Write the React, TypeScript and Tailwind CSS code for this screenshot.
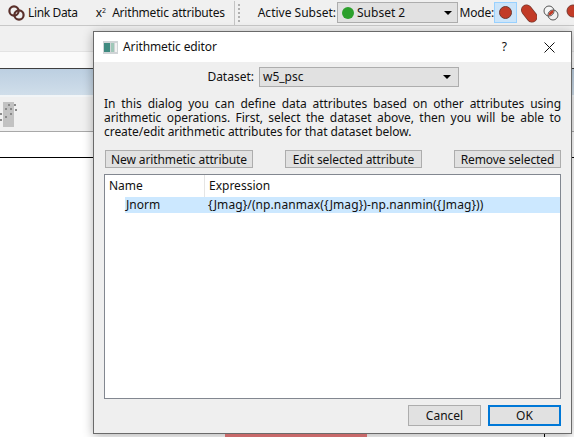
const font = { fontFamily: '"Noto Sans", "Open Sans", sans-serif' };

function Btn({ label, w }: { label: string; w: string }) {
  return (
    <div className={`${w} h-[18px] pt-px flex items-center justify-center bg-[#e1e1e1] border border-[#adadad] text-[12px] leading-none tracking-[-0.1px] text-[#111]`}>
      {label}
    </div>
  );
}

function Rings() {
  return (
    <svg width="17" height="16" viewBox="0 0 17 16" fill="none" stroke="#5a2f2a" strokeWidth="2.2">
      <circle cx="6" cy="6" r="4.6" />
      <circle cx="11" cy="10" r="4.6" />
    </svg>
  );
}

function ModeIcons() {
  return (
    <div className="flex items-center">
      <div className="w-[23px] h-[21px] bg-[#cbe4f9] border border-[#99d1ff] flex items-center justify-center">
        <svg width="15" height="15"><circle cx="7.5" cy="7.5" r="6" fill="#c23b27" stroke="#6f3a30" /></svg>
      </div>
      <svg className="ml-[4px]" width="16" height="20" viewBox="0 0 16 20">
        <path d="M5.5 7 L11 14" stroke="#7a3a30" strokeWidth="11" strokeLinecap="round" />
        <path d="M5.5 7 L11 14" stroke="#c23b27" strokeWidth="9.6" strokeLinecap="round" />
      </svg>
      <svg className="ml-[5px]" width="18" height="20" viewBox="0 0 18 20">
        <circle cx="7" cy="8" r="5" fill="#f5f5f5" stroke="#555" />
        <circle cx="11" cy="12" r="5" fill="none" stroke="#555" />
        <path d="M6.5 12.5 C6.5 9.5 8.5 7.5 11.5 7 C11.8 9.8 9.8 12.2 6.5 12.5 Z" fill="#c23b27" />
      </svg>
      <svg className="ml-[6px]" width="8" height="20" viewBox="0 0 8 20">
        <circle cx="7" cy="8" r="6" fill="#c23b27" stroke="#7a3a30" />
      </svg>
    </div>
  );
}

export default function App() {
  return (
    <div style={font} className="relative w-[574px] h-[437px] overflow-hidden bg-white text-[12px] text-[#111]">
      <div className="h-[26px] bg-[#f0f0f0] border-b border-[#c8c8c8] flex items-center text-[12px] whitespace-nowrap">
        <div className="ml-[8px]"><Rings /></div>
        <span className="ml-[3px] tracking-[-0.35px]">Link Data</span>
        <span className="ml-[18px]">x<sup className="text-[7px]">2</sup></span>
        <span className="ml-[6px] tracking-[-0.2px]">Arithmetic attributes</span>
        <div className="ml-[9px] w-px h-[24px] bg-[#c4c4c4]" />
        <div className="ml-[3px] w-[2px] h-[18px] bg-[repeating-linear-gradient(to_bottom,#b0b0b0_0,#b0b0b0_2px,transparent_2px,transparent_4px)]" />
        <span className="ml-[18px]">Active Subset:</span>
        <div className="ml-[1px] w-[125px] h-[21px] bg-[#e1e1e1] border border-[#adadad] flex items-center pl-[4px]">
          <span className="w-[12px] h-[12px] rounded-full bg-[#2ca02c]" />
          <span className="ml-[3px] flex-1">Subset 2</span>
          <span className="mr-[5px] w-0 h-0 border-x-[4px] border-x-transparent border-t-[4px] border-t-black" />
        </div>
        <span className="w-[36px] pl-px tracking-[-0.2px]">Mode:</span>
        <ModeIcons />
      </div>
      <div className="h-[26px] bg-[#f0f0f0] border-b border-[#e3e3e3]" />
      <div className="h-[17px] bg-[#fafafa] border-b border-[#3f3f3f]" />
      <div className="h-[28px] bg-gradient-to-b from-[#bccfe1] to-[#d0deea] border-b-[2px] border-[#f2f5f7]" />
      <div className="h-[35px] bg-[#f0f0f0] border-b border-[#a8a8a8] flex items-center">
        <svg width="18" height="25" viewBox="0 0 18 25">
          <rect x="3" y="0" width="11" height="25" fill="#c2c2c2" />
          <g fill="#8a8a8a">
            <rect x="8" y="2" width="2" height="2" /><rect x="14" y="2" width="2" height="2" />
            <rect x="5" y="6" width="2" height="2" /><rect x="10" y="6" width="2" height="2" />
            <rect x="15" y="7" width="2" height="2" /><rect x="10" y="11" width="2" height="2" />
            <rect x="0" y="11" width="2" height="2" /><rect x="5" y="14" width="2" height="2" />
            <rect x="0" y="17" width="2" height="2" />
          </g>
        </svg>
      </div>
      <div className="h-[26px] bg-white border-b border-black" />

      <div className="absolute left-[93px] top-[31px] w-[479px] h-[403px] bg-[#efefef] border border-[#6a6a6a] shadow-[0_2px_10px_rgba(0,0,0,0.3)] flex flex-col">
        <div className="h-[30px] bg-white flex items-center pl-[9px] shrink-0">
          <svg width="15" height="13" viewBox="0 0 15 13">
            <rect width="15" height="13" fill="#d0d4d6" />
            <rect x="1" y="2" width="6" height="9" fill="#3f8a80" />
            <rect x="8" y="2" width="3" height="9" fill="#9fc7b8" />
            <rect x="12" y="2" width="2" height="9" fill="#f2f2f2" />
          </svg>
          <span className="ml-[5px] text-[12px] tracking-[-0.1px]">Arithmetic editor</span>
          <span className="ml-auto text-[12px]">?</span>
          <svg className="ml-[37px] mr-[16px]" width="11" height="11" viewBox="0 0 11 11" stroke="#111" fill="none"><path d="M0.5 0.5 L10.5 10.5 M10.5 0.5 L0.5 10.5" /></svg>
        </div>
        <div className="flex items-center justify-end mt-[5px] h-[20px] shrink-0 pr-[112px]">
          <span className="mr-[5px]">Dataset:</span>
          <div className="w-[200px] h-[20px] bg-[#e1e1e1] border border-[#adadad] flex items-center pl-[3px]">
            <span className="flex-1">w5_psc</span>
            <span className="mr-[7px] w-0 h-0 border-x-[4px] border-x-transparent border-t-[4px] border-t-black" />
          </div>
        </div>
        <p className="mx-[10px] mt-[10px] text-[12px] leading-[14px] tracking-[-0.05px] text-justify">
          In this dialog you can define data attributes based on other attributes using arithmetic operations. First, select the dataset above, then you will be able to create/edit arithmetic attributes for that dataset below.
        </p>
        <div className="flex justify-between ml-[11px] mr-[10px] mt-[11px] shrink-0">
          <Btn label="New arithmetic attribute" w="w-[148px]" />
          <Btn label="Edit selected attribute" w="w-[137px]" />
          <Btn label="Remove selected" w="w-[107px]" />
        </div>
        <div className="ml-[10px] mr-[10px] mt-[6px] h-[225px] bg-white border border-[#828790] shrink-0">
          <div className="flex h-[22px] items-center">
            <div className="w-[100px] pl-[4px] h-full flex items-center border-r border-[#e5e5e5]">Name</div>
            <div className="pl-[4px]">Expression</div>
          </div>
          <div className="flex h-[16px] items-center ml-[20px] bg-[#cce8ff]">
            <div className="w-[80px] pl-[1px]">Jnorm</div>
            <div className="pl-[3px] tracking-[0.09px]">{"{Jmag}/(np.nanmax({Jmag})-np.nanmin({Jmag}))"}</div>
          </div>
        </div>
        <div className="flex justify-end gap-[7px] mr-[10px] mt-[6px] shrink-0">
          <div className="w-[73px] h-[21px] bg-[#e1e1e1] border border-[#adadad] flex items-center justify-center">Cancel</div>
          <div className="w-[73px] h-[21px] bg-[#e1e1e1] border-2 border-[#0078d7] flex items-center justify-center">OK</div>
        </div>
      </div>
      <div className="absolute left-[225px] top-[434px] w-[142px] h-[3px] bg-[#c8696a]" />
      <div className="absolute left-[544px] top-[434px] w-px h-[3px] bg-black" />
    </div>
  );
}
